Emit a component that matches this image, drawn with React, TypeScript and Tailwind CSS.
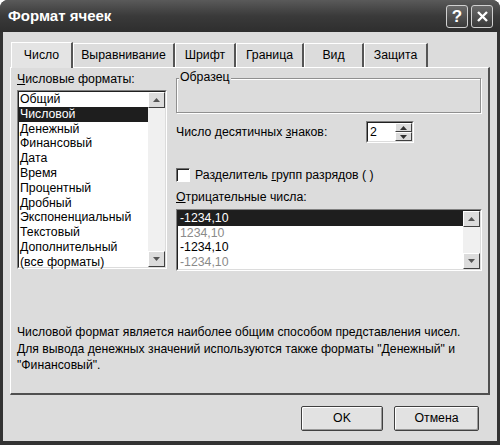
import React from 'react';

const font = { fontFamily: '"Liberation Sans", Arial, sans-serif' };

function Sunken({ className, children }: { className?: string; children: React.ReactNode }) {
  return (
    <div className={`border border-t-[#808080] border-l-[#808080] border-r-white border-b-white ${className ?? ''}`}>
      <div className="h-full border border-t-[#202020] border-l-[#202020] border-r-[#dcdcdc] border-b-[#dcdcdc] bg-white">
        {children}
      </div>
    </div>
  );
}

function ScrollBtn({ down }: { down?: boolean }) {
  return (
    <div className="w-[17px] h-[16px] bg-[#dcdcdc] border border-t-white border-l-white border-r-[#404040] border-b-[#404040] flex items-center justify-center">
      <svg width="7" height="4" viewBox="0 0 7 4">
        <path d={down ? 'M0 0h7L3.5 4z' : 'M0 4h7L3.5 0z'} fill="#555" />
      </svg>
    </div>
  );
}

function Scrollbar() {
  return (
    <div className="w-[17px] h-full flex flex-col justify-between bg-[#f0f0f0]">
      <ScrollBtn />
      <ScrollBtn down />
    </div>
  );
}

const formats = [
  'Общий',
  'Числовой',
  'Денежный',
  'Финансовый',
  'Дата',
  'Время',
  'Процентный',
  'Дробный',
  'Экспоненциальный',
  'Текстовый',
  'Дополнительный',
  '(все форматы)',
];

const negatives: { text: string; color: string }[] = [
  { text: '-1234,10', color: 'text-white' },
  { text: '1234,10', color: 'text-[#8a8a8a]' },
  { text: '-1234,10', color: 'text-black' },
  { text: '-1234,10', color: 'text-[#8a8a8a]' },
];

const tabs = ['Выравнивание', 'Шрифт', 'Граница', 'Вид', 'Защита'];
const tabWidths = ['w-[102px]', 'w-[61px]', 'w-[68px]', 'w-[60px]', 'w-[64px]'];

export default function App() {
  return (
    <div style={font} className="w-[500px] h-[445px] bg-[#333] rounded-t-[8px] flex flex-col text-[12.3px] text-black overflow-hidden">
      {/* title bar */}
      <div className="h-[32px] shrink-0 flex items-center justify-between pl-[8px] pr-[7px] bg-gradient-to-b from-[#5a5a5a] via-[#3a3a3a] to-[#2e2e2e]">
        <span className="text-white font-bold text-[15px] pt-[1px]">Формат ячеек</span>
        <div className="flex gap-[3px] pt-[1px]">
          <div className="w-[22px] h-[23px] rounded-[3px] border border-[#d0d0d0] bg-gradient-to-b from-[#6a6a6a] to-[#3a3a3a] flex items-center justify-center text-white text-[17px] font-bold">?</div>
          <div className="w-[22px] h-[23px] rounded-[3px] border border-[#d0d0d0] bg-gradient-to-b from-[#6a6a6a] to-[#3a3a3a] flex items-center justify-center">
            <svg width="13" height="13" viewBox="0 0 13 13">
              <path d="M2 2L11 11M11 2L2 11" stroke="white" strokeWidth="2.4" />
            </svg>
          </div>
        </div>
      </div>

      {/* body */}
      <div className="flex-1 mx-[3px] mb-[4px] bg-[#dcdcdc] flex flex-col pt-[9px] pl-[7px] pr-[8px]">
        {/* tabs */}
        <div className="flex items-end h-[26px] relative z-10">
          <div className="w-[62px] h-[26px] bg-[#e4e4e4] border-t border-l border-white border-r-2 border-r-[#555] flex items-center justify-center -mb-[1px] pb-[1px] ml-[1px]">
            Число
          </div>
          {tabs.map((t, i) => (
            <div
              key={t}
              className={`${tabWidths[i]} h-[24px] border-t border-l border-white border-r-2 border-r-[#555] flex items-center justify-center`}
            >
              {t}
            </div>
          ))}
        </div>

        {/* panel */}
        <div className="h-[328px] w-[480px] border-t border-l border-white border-r-2 border-b-2 border-r-[#505050] border-b-[#505050] flex flex-col">
          <div className="flex pl-[6px]">
            {/* left column */}
            <div className="w-[150px] flex flex-col">
              <div className="mt-[4px] h-[15px] leading-[15px]">
                <span className="underline">Ч</span>исловые форматы:
              </div>
              <Sunken className="mt-[3px] h-[179px]">
                <div className="flex h-full">
                  <div className="flex-1 flex flex-col leading-[14.8px]">
                    {formats.map((f) => (
                      <div key={f} className={`pl-[1px] ${f === 'Числовой' ? 'bg-[#1e1e1e] text-white' : ''}`}>
                        {f}
                      </div>
                    ))}
                  </div>
                  <Scrollbar />
                </div>
              </Sunken>
            </div>

            {/* right column */}
            <div className="ml-[9px] w-[306px] flex flex-col">
              <div className="relative mt-[10px] h-[35px] w-[305px] border border-[#909090] shadow-[1px_1px_0_white,inset_1px_1px_0_white]">
                <span className="absolute -top-[9px] left-[2px] bg-[#dcdcdc] px-[1px] leading-[15px]">Образец</span>
              </div>
              <div className="mt-[8px] flex items-center h-[22px]">
                <span className="w-[190px]">
                  Число десятичных <span className="underline">з</span>наков:
                </span>
                <Sunken className="w-[48px] h-[22px]">
                  <div className="flex h-full">
                    <span className="flex-1 pl-[2px] leading-[18px]">2</span>
                    <div className="w-[17px] flex flex-col">
                      <div className="flex-1 bg-[#dcdcdc] border border-t-white border-l-white border-r-[#404040] border-b-[#404040] flex items-center justify-center">
                        <svg width="7" height="4" viewBox="0 0 7 4"><path d="M0 4h7L3.5 0z" fill="#333" /></svg>
                      </div>
                      <div className="flex-1 bg-[#dcdcdc] border border-t-white border-l-white border-r-[#404040] border-b-[#404040] flex items-center justify-center">
                        <svg width="7" height="4" viewBox="0 0 7 4"><path d="M0 0h7L3.5 4z" fill="#333" /></svg>
                      </div>
                    </div>
                  </div>
                </Sunken>
              </div>
              <div className="mt-[25px] flex items-center h-[14px]">
                <div className="w-[14px] h-[14px] bg-white border border-t-[#707070] border-l-[#707070] border-r-white border-b-white shadow-[inset_1px_1px_0_#202020]" />
                <span className="ml-[5px]">
                  Разделитель <span className="underline">г</span>рупп разрядов ( )
                </span>
              </div>
              <div className="mt-[8px] h-[15px] leading-[15px]">
                <span className="underline">О</span>трицательные числа:
              </div>
              <Sunken className="mt-[4px] h-[62px] w-[306px]">
                <div className="flex h-full">
                  <div className="flex-1 flex flex-col leading-[14.7px]">
                    {negatives.map((n, i) => (
                      <div key={i} className={`pl-[2px] ${n.color} ${i === 0 ? 'bg-[#1e1e1e]' : ''}`}>
                        {n.text}
                      </div>
                    ))}
                  </div>
                  <Scrollbar />
                </div>
              </Sunken>
            </div>
          </div>

          <p className="mt-[53px] pl-[6px] leading-[16.5px] text-[12.2px]">
            Числовой формат является наиболее общим способом представления чисел.
            <br />
            Для вывода денежных значений используются также форматы "Денежный" и
            <br />
            "Финансовый".
          </p>
        </div>

        {/* buttons */}
        <div className="flex justify-end gap-[11px] mt-[11px] pr-[10px]">
          <button className="w-[82px] h-[25px] bg-[#e2e2e2] border border-[#404040] shadow-[inset_1px_1px_0_white,inset_-1px_-1px_0_#9a9a9a] rounded-[2px]">
            OK
          </button>
          <button className="w-[85px] h-[25px] bg-[#e2e2e2] border border-[#404040] shadow-[inset_1px_1px_0_white,inset_-1px_-1px_0_#9a9a9a] rounded-[2px]">
            Отмена
          </button>
        </div>
      </div>
    </div>
  );
}
